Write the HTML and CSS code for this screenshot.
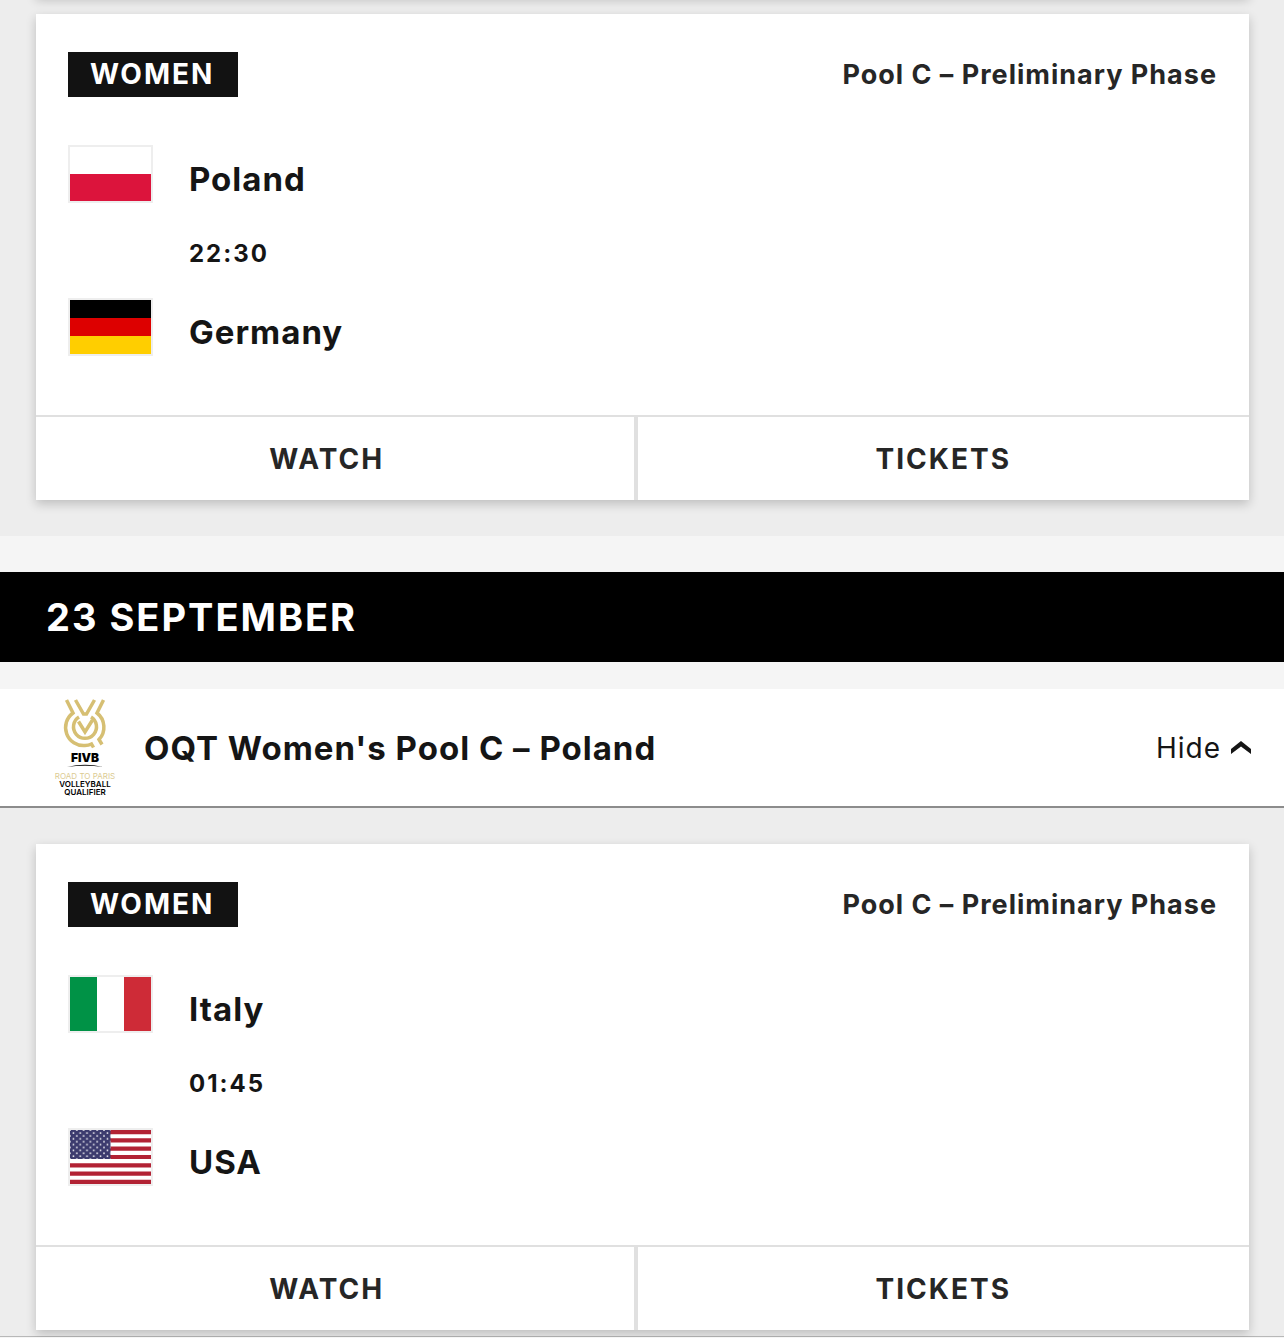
FILE: index.html
```html
<!DOCTYPE html>
<html lang="en">
<head>
    <meta charset="UTF-8">
    <meta name="viewport" content="width=device-width, initial-scale=1.0">
    <title>Match Schedule</title>
    <link rel="stylesheet" href="styles.css">
</head>
<body>
    <main class="schedule">
        <section class="matches">
            <div class="card card-previous"></div>
            <article class="card">
                <div class="card-header">
                    <span class="badge">WOMEN</span>
                    <span class="phase">Pool C – Preliminary Phase</span>
                </div>
                <div class="teams">
                    <div class="team">
                        <svg class="flag" viewBox="0 0 81 54" preserveAspectRatio="none" role="img" aria-label="Poland">
                            <rect width="81" height="54" fill="#fff"/>
                            <rect y="27" width="81" height="27" fill="#dc143c"/>
                        </svg>
                        <span class="team-name">Poland</span>
                    </div>
                    <time class="match-time">22:30</time>
                    <div class="team">
                        <svg class="flag" viewBox="0 0 81 54" preserveAspectRatio="none" role="img" aria-label="Germany">
                            <rect width="81" height="18" fill="#000"/>
                            <rect y="18" width="81" height="18" fill="#d00"/>
                            <rect y="36" width="81" height="18" fill="#ffce00"/>
                        </svg>
                        <span class="team-name">Germany</span>
                    </div>
                </div>
                <div class="card-footer">
                    <a class="card-link" href="#watch">WATCH</a>
                    <a class="card-link" href="#tickets">TICKETS</a>
                </div>
            </article>
        </section>

        <h2 class="date">23 SEPTEMBER</h2>

        <header class="pool">
            <svg class="pool-logo" viewBox="0 0 58 98" role="img" aria-label="FIVB Road to Paris Volleyball Qualifier">
                <g fill="none" stroke="#d6bf73" stroke-width="3.500">
                    <path d="M10.500 1l6.500 13A18 18 0 0 0 29 46.500c2.500 0 4.500-.5 6.500-1.500l2 3.500"/>
                    <path d="M47.500 1l-6.500 13A18 18 0 0 1 43 40.500l3 5"/>
                    <path d="M19.500 1l8 14h3l8-14"/>
                    <path d="M23 18a11.500 11.500 0 1 0 12 0"/>
                    <path d="M22.500 22.500l6.500 10.500 7.500-12"/>
                </g>
                <text class="logo-fivb" x="29" y="63" text-anchor="middle">FIVB</text>
                <path d="M11 68q18-4.500 36 0q-18-2.500-36 0z" fill="#111"/>
                <text class="logo-road" x="29" y="80" text-anchor="middle">ROAD TO PARIS</text>
                <text class="logo-text" x="29" y="88" text-anchor="middle">VOLLEYBALL</text>
                <text class="logo-text" x="29" y="96" text-anchor="middle">QUALIFIER</text>
            </svg>
            <h3 class="pool-title">OQT Women's Pool C – Poland</h3>
            <button class="toggle" type="button">
                Hide
                <svg class="chevron" viewBox="0 0 20 14" aria-hidden="true">
                    <path d="M0 8L10 0l10 8v5L10 5.500 0 13z" fill="#151515"/>
                </svg>
            </button>
        </header>

        <section class="matches matches-last">
            <article class="card">
                <div class="card-header">
                    <span class="badge">WOMEN</span>
                    <span class="phase">Pool C – Preliminary Phase</span>
                </div>
                <div class="teams">
                    <div class="team">
                        <svg class="flag" viewBox="0 0 81 54" preserveAspectRatio="none" role="img" aria-label="Italy">
                            <rect width="81" height="54" fill="#fff"/>
                            <rect width="27" height="54" fill="#009246"/>
                            <rect x="54" width="27" height="54" fill="#ce2b37"/>
                        </svg>
                        <span class="team-name">Italy</span>
                    </div>
                    <time class="match-time">01:45</time>
                    <div class="team">
                        <svg class="flag" viewBox="0 0 81 54" preserveAspectRatio="none" role="img" aria-label="USA">
                            <defs>
                                <pattern id="stars" width="6.800" height="5.800" patternUnits="userSpaceOnUse">
                                    <circle cx="3.400" cy="3" r="0.900" fill="#fff"/>
                                    <circle cx="0" cy="0.100" r="0.900" fill="#fff"/>
                                    <circle cx="6.800" cy="0.100" r="0.900" fill="#fff"/>
                                    <circle cx="0" cy="5.900" r="0.900" fill="#fff"/>
                                    <circle cx="6.800" cy="5.900" r="0.900" fill="#fff"/>
                                </pattern>
                            </defs>
                            <rect width="81" height="54" fill="#fff"/>
                            <path d="M0 2.080h81M0 10.380h81M0 18.690h81M0 27h81M0 35.310h81M0 43.620h81M0 51.920h81" stroke="#b22234" stroke-width="4.150"/>
                            <rect width="40.500" height="29" fill="#3c3b6e"/>
                            <rect width="40.500" height="29" fill="url(#stars)"/>
                        </svg>
                        <span class="team-name">USA</span>
                    </div>
                </div>
                <div class="card-footer">
                    <a class="card-link" href="#watch">WATCH</a>
                    <a class="card-link" href="#tickets">TICKETS</a>
                </div>
            </article>
        </section>
    </main>
</body>
</html>
```
FILE: styles.css
```css
* {
    box-sizing: border-box;
}
body {
    margin: 0;
    background-color: #f5f5f5;
    color: #151515;
    font-family: Inter, "Liberation Sans", sans-serif;
    letter-spacing: 1px;
}
.schedule {
    overflow: hidden;
}
.matches {
    display: flex;
    flex-direction: column;
    padding: 36px 35px 36px 36px;
    background-color: #ededed;
}
.matches:first-child {
    padding-top: 0;
}
.matches-last {
    padding-bottom: 6px;
    border-bottom: 1px solid #b8b8b8;
}
.card {
    background-color: #fff;
    box-shadow: 0 4px 10px rgba(0,0,0,0.2);
}
.card-previous {
    height: 36px;
    margin-top: -40px;
    margin-bottom: 18px;
}
.card-header {
    display: flex;
    justify-content: space-between;
    padding: 38px 32px 0;
}
.badge {
    height: 45px;
    padding: 0 24px 0 22px;
    background-color: #121212;
    color: #fff;
    font-size: 28px;
    font-weight: 700;
    line-height: 45px;
    letter-spacing: 2px;
}
.phase {
    color: #262626;
    font-size: 27px;
    font-weight: 700;
    line-height: 45px;
}
.teams {
    padding: 48px 32px 59px;
}
.team {
    display: flex;
    align-items: flex-end;
    gap: 36px;
}
.flag {
    width: 85px;
    height: 58px;
    border: 2px solid #eee;
}
.team-name {
    font-size: 33px;
    font-weight: 700;
    line-height: 48px;
}
.match-time {
    display: block;
    padding: 39px 0 32px 121px;
    font-size: 24px;
    font-weight: 700;
    line-height: 24px;
    letter-spacing: 2px;
}
.card-footer {
    display: flex;
    border-top: 2px solid #e0e0e0;
}
.card-link {
    flex: 1;
    height: 83px;
    color: #262626;
    font-size: 28px;
    font-weight: 700;
    line-height: 84px;
    letter-spacing: 2px;
    text-align: center;
    text-decoration: none;
}
.card-link:first-child {
    flex: 0 0 calc(50% - 5px);
    padding-right: 16px;
    border-right: 4px solid #e0e0e0;
}
.date {
    margin: 36px 0 27px;
    padding: 0 46px;
    background-color: #000;
    color: #fff;
    font-size: 38px;
    font-weight: 700;
    line-height: 90px;
    letter-spacing: 2px;
}
.pool {
    display: flex;
    align-items: center;
    height: 119px;
    padding: 0 33px 0 56px;
    background-color: #fff;
    border-bottom: 2px solid #8c8c8c;
}
.pool-logo {
    width: 58px;
    height: 98px;
    overflow: visible;
}
.logo-fivb {
    font-size: 12px;
    font-weight: 900;
    letter-spacing: 0;
}
.logo-road {
    fill: #dccb92;
    font-size: 8px;
    letter-spacing: 0;
}
.logo-text {
    font-size: 8px;
    font-weight: 600;
    letter-spacing: 0;
}
.pool-title {
    flex: 1;
    margin: 0 0 0 30px;
    font-size: 33px;
    font-weight: 700;
}
.toggle {
    display: flex;
    align-items: center;
    gap: 10px;
    padding: 0;
    border: none;
    background: none;
    color: #151515;
    font-family: inherit;
    font-size: 28px;
    letter-spacing: 1px;
    cursor: pointer;
}
.chevron {
    width: 20px;
    height: 14px;
}
```
